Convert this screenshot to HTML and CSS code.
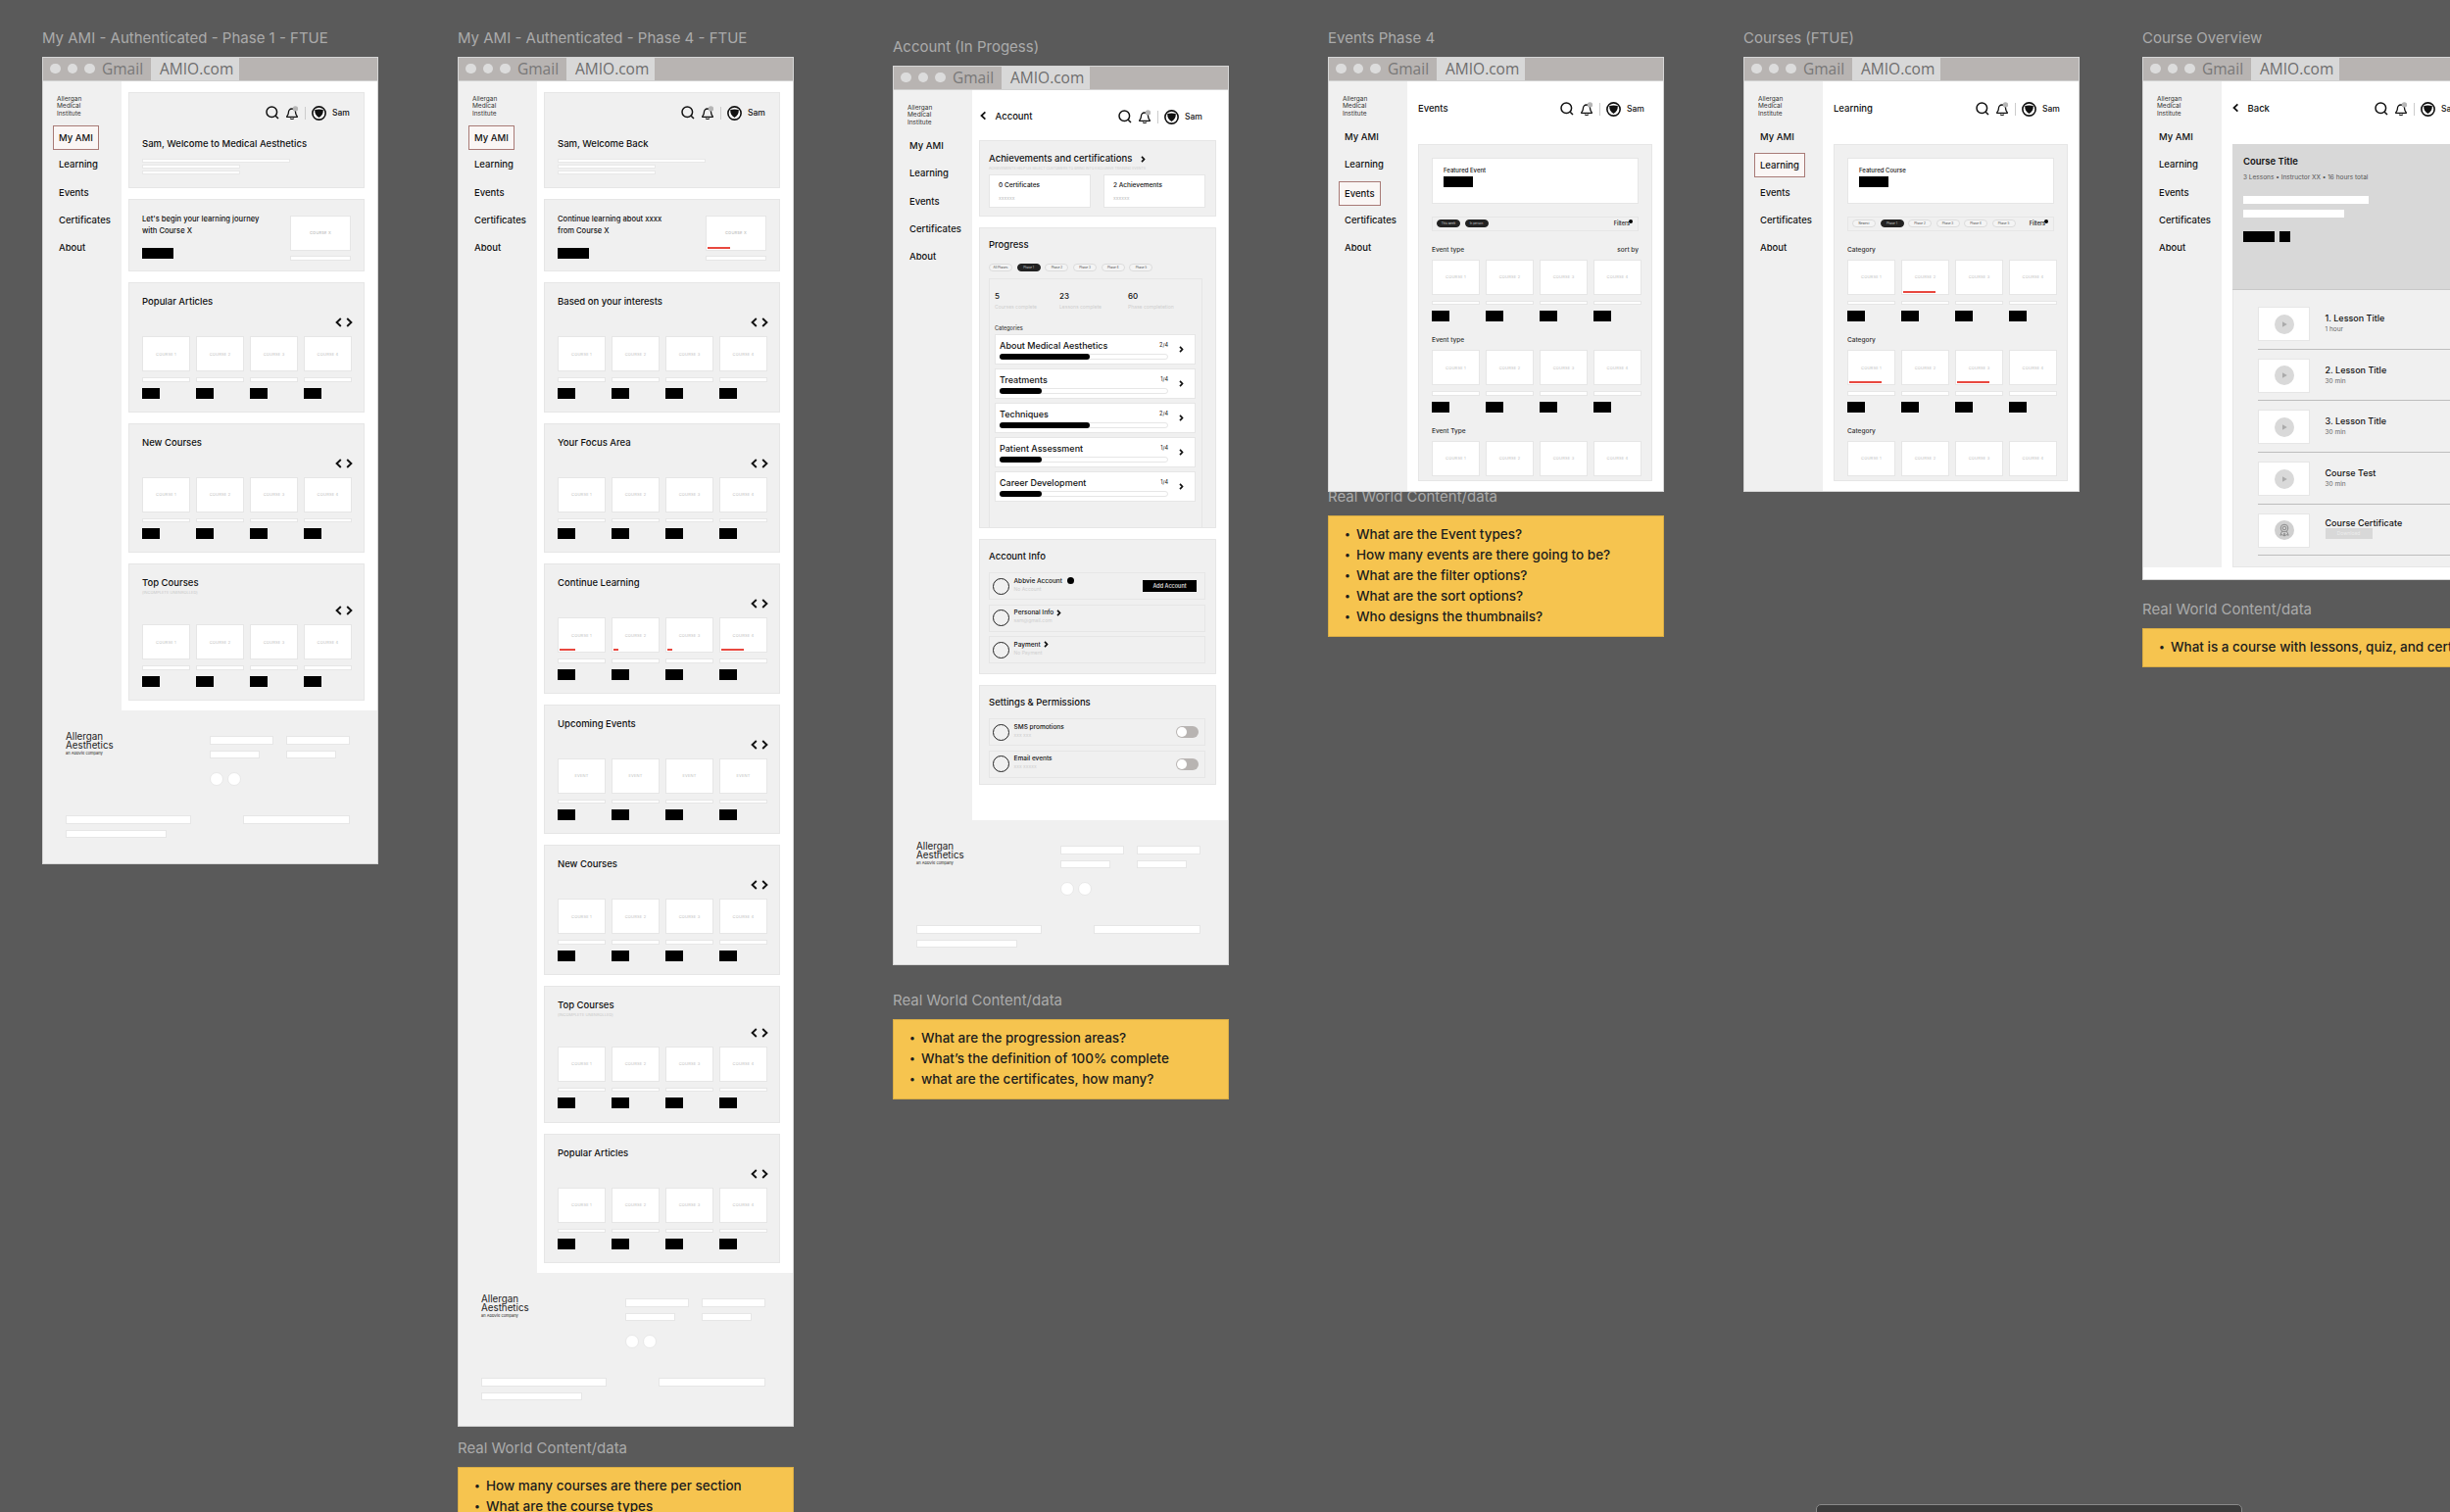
FILE: index.html
```html
<!DOCTYPE html>
<html lang="en">
<head>
    <meta charset="UTF-8">
    <title>AMI wireframes</title>
    <link rel="stylesheet" href="styles.css">
</head>
<body>
<svg class="sprite" width="0" height="0">
    <symbol id="i-search" viewBox="0 0 14 14"><circle cx="6.300" cy="6.300" r="5.300" fill="none" stroke="#111" stroke-width="1.500"/><path d="M10.200 10.200l2.800 2.800" stroke="#111" stroke-width="1.500"/></symbol>
    <symbol id="i-bell" viewBox="0 0 13 15"><path d="M6 3c-2.400 0-3.600 1.800-3.600 3.800 0 2-.8 3-1.600 3.800v.7h10.400v-.7c-.8-.8-1.600-1.800-1.600-3.800C9.600 4.800 8.400 3 6 3z" fill="none" stroke="#111" stroke-width="1.300"/><path d="M4.200 12.600c.4 1.200 3.200 1.200 3.600 0" fill="none" stroke="#111" stroke-width="1.200"/><circle cx="9.400" cy="2.900" r="2.700" fill="#b5b5b5"/></symbol>
    <symbol id="i-avatar" viewBox="0 0 14 14"><circle cx="7" cy="7" r="6.200" fill="#fff" stroke="#111" stroke-width="1.500"/><path d="M3 3.800c2.600-.7 5.400-.7 8 0 .2 3.600-1.200 6-4 7.400-2.800-1.400-4.200-3.800-4-7.400z" fill="#111"/></symbol>
    <symbol id="i-left" viewBox="0 0 7 10"><path d="M5.800 1L1.600 5l4.200 4" fill="none" stroke="#111" stroke-width="1.900"/></symbol>
    <symbol id="i-right" viewBox="0 0 7 10"><path d="M1.200 1l4.200 4-4.200 4" fill="none" stroke="#111" stroke-width="1.900"/></symbol>
    <symbol id="i-chev" viewBox="0 0 5 7"><path d="M1 .8l2.500 2.700L1 6.200" fill="none" stroke="#111" stroke-width="1.700"/></symbol>
    <symbol id="i-play" viewBox="0 0 20 20"><circle cx="10" cy="10" r="10" fill="#d9d9d9"/><path d="M8 7.300l4.800 2.700L8 12.700z" fill="#ababab"/></symbol>
    <symbol id="i-badge" viewBox="0 0 20 20"><circle cx="10" cy="10" r="10" fill="#d0d0d0"/><circle cx="10" cy="8" r="3.800" fill="none" stroke="#8c8c8c"/><circle cx="10" cy="8" r="1.800" fill="none" stroke="#8c8c8c"/><path d="M7.500 11.200l-1.700 4 2.300-.6 1.400 1.500.5-3 .5 3 1.400-1.500 2.300.6-1.700-4" fill="none" stroke="#8c8c8c"/></symbol>
</svg>

<div class="board">

    <!-- My AMI phase 1 -->
    <section class="group group-ftue">
        <div class="label">My AMI - Authenticated - Phase 1 - FTUE</div>
        <div class="frame">
            <div class="browser"><span class="dots"><i></i><i></i><i></i></span><span class="gmail">Gmail</span><span class="tab">AMIO.com</span></div>
            <div class="page">
                <aside class="side">
                    <div class="brand">Allergan<br>Medical<br>Institute</div>
                    <a class="nav active">My AMI</a><a class="nav">Learning</a><a class="nav">Events</a><a class="nav">Certificates</a><a class="nav">About</a>
                </aside>
                <main class="main main-cards">
                    <div class="card card-welcome">
                        <div class="tools"><svg class="t-search"><use href="#i-search"/></svg><svg class="t-bell"><use href="#i-bell"/></svg><i class="t-sep"></i><svg class="t-avatar"><use href="#i-avatar"/></svg><span class="t-name">Sam</span></div>
                        <h3 class="welcome-title">Sam, Welcome to Medical Aesthetics</h3>
                        <i class="line line-long"></i><i class="line"></i><i class="line"></i>
                    </div>
                    <div class="card card-promo">
                        <div class="promo-text"><p>Let's begin your learning journey<br>with Course X</p><i class="black promo-btn"></i></div>
                        <div class="promo-thumb"><div class="thumb thumb-x">COURSE X</div><i class="bar"></i></div>
                    </div>
                    <div class="card card-row">
                        <h3>Popular Articles</h3>
                        <div class="arrows"><svg><use href="#i-left"/></svg><svg><use href="#i-right"/></svg></div>
                        <div class="tiles">
                            <div class="tile"><div class="thumb">COURSE 1</div><i class="bar"></i><i class="black"></i></div>
                            <div class="tile"><div class="thumb">COURSE 2</div><i class="bar"></i><i class="black"></i></div>
                            <div class="tile"><div class="thumb">COURSE 3</div><i class="bar"></i><i class="black"></i></div>
                            <div class="tile"><div class="thumb">COURSE 4</div><i class="bar"></i><i class="black"></i></div>
                        </div>
                    </div>
                    <div class="card card-row">
                        <h3>New Courses</h3>
                        <div class="arrows"><svg><use href="#i-left"/></svg><svg><use href="#i-right"/></svg></div>
                        <div class="tiles">
                            <div class="tile"><div class="thumb">COURSE 1</div><i class="bar"></i><i class="black"></i></div>
                            <div class="tile"><div class="thumb">COURSE 2</div><i class="bar"></i><i class="black"></i></div>
                            <div class="tile"><div class="thumb">COURSE 3</div><i class="bar"></i><i class="black"></i></div>
                            <div class="tile"><div class="thumb">COURSE 4</div><i class="bar"></i><i class="black"></i></div>
                        </div>
                    </div>
                    <div class="card card-row">
                        <h3>Top Courses</h3>
                        <div class="row-note">(INCOMPLETE UNENROLLED)</div>
                        <div class="arrows"><svg><use href="#i-left"/></svg><svg><use href="#i-right"/></svg></div>
                        <div class="tiles">
                            <div class="tile"><div class="thumb">COURSE 1</div><i class="bar"></i><i class="black"></i></div>
                            <div class="tile"><div class="thumb">COURSE 2</div><i class="bar"></i><i class="black"></i></div>
                            <div class="tile"><div class="thumb">COURSE 3</div><i class="bar"></i><i class="black"></i></div>
                            <div class="tile"><div class="thumb">COURSE 4</div><i class="bar"></i><i class="black"></i></div>
                        </div>
                    </div>
                </main>
            </div>
            <footer class="foot">
                <div class="foot-top">
                    <div class="foot-logo">Allergan<br>Aesthetics<small>an AbbVie company</small></div>
                    <div class="foot-links"><i class="fl"></i><i class="fl"></i><i class="fl fl-short"></i><i class="fl fl-short"></i><span class="foot-dots"><i></i><i></i></span></div>
                </div>
                <div class="foot-bottom">
                    <div><i class="fb fb-a"></i><i class="fb fb-b"></i></div>
                    <i class="fb fb-c"></i>
                </div>
            </footer>
        </div>
    </section>

    <!-- My AMI phase 4 -->
    <section class="group group-phase4">
        <div class="label">My AMI - Authenticated - Phase 4 - FTUE</div>
        <div class="frame">
            <div class="browser"><span class="dots"><i></i><i></i><i></i></span><span class="gmail">Gmail</span><span class="tab">AMIO.com</span></div>
            <div class="page">
                <aside class="side">
                    <div class="brand">Allergan<br>Medical<br>Institute</div>
                    <a class="nav active">My AMI</a><a class="nav">Learning</a><a class="nav">Events</a><a class="nav">Certificates</a><a class="nav">About</a>
                </aside>
                <main class="main main-cards">
                    <div class="card card-welcome">
                        <div class="tools"><svg class="t-search"><use href="#i-search"/></svg><svg class="t-bell"><use href="#i-bell"/></svg><i class="t-sep"></i><svg class="t-avatar"><use href="#i-avatar"/></svg><span class="t-name">Sam</span></div>
                        <h3 class="welcome-title">Sam, Welcome Back</h3>
                        <i class="line line-long"></i><i class="line"></i><i class="line"></i>
                    </div>
                    <div class="card card-promo">
                        <div class="promo-text"><p>Continue learning about xxxx<br>from Course X</p><i class="black promo-btn"></i></div>
                        <div class="promo-thumb"><div class="thumb thumb-x">COURSE X<i class="prog" style="width:23px"></i></div><i class="bar"></i></div>
                    </div>
                    <div class="card card-row">
                        <h3>Based on your interests</h3>
                        <div class="arrows"><svg><use href="#i-left"/></svg><svg><use href="#i-right"/></svg></div>
                        <div class="tiles">
                            <div class="tile"><div class="thumb">COURSE 1</div><i class="bar"></i><i class="black"></i></div>
                            <div class="tile"><div class="thumb">COURSE 2</div><i class="bar"></i><i class="black"></i></div>
                            <div class="tile"><div class="thumb">COURSE 3</div><i class="bar"></i><i class="black"></i></div>
                            <div class="tile"><div class="thumb">COURSE 4</div><i class="bar"></i><i class="black"></i></div>
                        </div>
                    </div>
                    <div class="card card-row">
                        <h3>Your Focus Area</h3>
                        <div class="arrows"><svg><use href="#i-left"/></svg><svg><use href="#i-right"/></svg></div>
                        <div class="tiles">
                            <div class="tile"><div class="thumb">COURSE 1</div><i class="bar"></i><i class="black"></i></div>
                            <div class="tile"><div class="thumb">COURSE 2</div><i class="bar"></i><i class="black"></i></div>
                            <div class="tile"><div class="thumb">COURSE 3</div><i class="bar"></i><i class="black"></i></div>
                            <div class="tile"><div class="thumb">COURSE 4</div><i class="bar"></i><i class="black"></i></div>
                        </div>
                    </div>
                    <div class="card card-row">
                        <h3>Continue Learning</h3>
                        <div class="arrows"><svg><use href="#i-left"/></svg><svg><use href="#i-right"/></svg></div>
                        <div class="tiles">
                            <div class="tile"><div class="thumb">COURSE 1<i class="prog" style="width:16px"></i></div><i class="bar"></i><i class="black"></i></div>
                            <div class="tile"><div class="thumb">COURSE 2<i class="prog" style="width:5px"></i></div><i class="bar"></i><i class="black"></i></div>
                            <div class="tile"><div class="thumb">COURSE 3<i class="prog" style="width:5px"></i></div><i class="bar"></i><i class="black"></i></div>
                            <div class="tile"><div class="thumb">COURSE 4<i class="prog" style="width:23px"></i></div><i class="bar"></i><i class="black"></i></div>
                        </div>
                    </div>
                    <div class="card card-row">
                        <h3>Upcoming Events</h3>
                        <div class="arrows"><svg><use href="#i-left"/></svg><svg><use href="#i-right"/></svg></div>
                        <div class="tiles">
                            <div class="tile"><div class="thumb">EVENT</div><i class="bar"></i><i class="black"></i></div>
                            <div class="tile"><div class="thumb">EVENT</div><i class="bar"></i><i class="black"></i></div>
                            <div class="tile"><div class="thumb">EVENT</div><i class="bar"></i><i class="black"></i></div>
                            <div class="tile"><div class="thumb">EVENT</div><i class="bar"></i><i class="black"></i></div>
                        </div>
                    </div>
                    <div class="card card-row">
                        <h3>New Courses</h3>
                        <div class="arrows"><svg><use href="#i-left"/></svg><svg><use href="#i-right"/></svg></div>
                        <div class="tiles">
                            <div class="tile"><div class="thumb">COURSE 1</div><i class="bar"></i><i class="black"></i></div>
                            <div class="tile"><div class="thumb">COURSE 2</div><i class="bar"></i><i class="black"></i></div>
                            <div class="tile"><div class="thumb">COURSE 3</div><i class="bar"></i><i class="black"></i></div>
                            <div class="tile"><div class="thumb">COURSE 4</div><i class="bar"></i><i class="black"></i></div>
                        </div>
                    </div>
                    <div class="card card-row">
                        <h3>Top Courses</h3>
                        <div class="row-note">(INCOMPLETE UNENROLLED)</div>
                        <div class="arrows"><svg><use href="#i-left"/></svg><svg><use href="#i-right"/></svg></div>
                        <div class="tiles">
                            <div class="tile"><div class="thumb">COURSE 1</div><i class="bar"></i><i class="black"></i></div>
                            <div class="tile"><div class="thumb">COURSE 2</div><i class="bar"></i><i class="black"></i></div>
                            <div class="tile"><div class="thumb">COURSE 3</div><i class="bar"></i><i class="black"></i></div>
                            <div class="tile"><div class="thumb">COURSE 4</div><i class="bar"></i><i class="black"></i></div>
                        </div>
                    </div>
                    <div class="card card-row">
                        <h3>Popular Articles</h3>
                        <div class="arrows"><svg><use href="#i-left"/></svg><svg><use href="#i-right"/></svg></div>
                        <div class="tiles">
                            <div class="tile"><div class="thumb">COURSE 1</div><i class="bar"></i><i class="black"></i></div>
                            <div class="tile"><div class="thumb">COURSE 2</div><i class="bar"></i><i class="black"></i></div>
                            <div class="tile"><div class="thumb">COURSE 3</div><i class="bar"></i><i class="black"></i></div>
                            <div class="tile"><div class="thumb">COURSE 4</div><i class="bar"></i><i class="black"></i></div>
                        </div>
                    </div>
                </main>
            </div>
            <footer class="foot">
                <div class="foot-top">
                    <div class="foot-logo">Allergan<br>Aesthetics<small>an AbbVie company</small></div>
                    <div class="foot-links"><i class="fl"></i><i class="fl"></i><i class="fl fl-short"></i><i class="fl fl-short"></i><span class="foot-dots"><i></i><i></i></span></div>
                </div>
                <div class="foot-bottom">
                    <div><i class="fb fb-a"></i><i class="fb fb-b"></i></div>
                    <i class="fb fb-c"></i>
                </div>
            </footer>
        </div>
        <div class="label label-data">Real World Content/data</div>
        <ul class="note">
            <li>How many courses are there per section</li>
            <li>What are the course types</li>
        </ul>
    </section>

    <!-- Account -->
    <section class="group group-account">
        <div class="label">Account (In Progess)</div>
        <div class="frame">
            <div class="browser"><span class="dots"><i></i><i></i><i></i></span><span class="gmail">Gmail</span><span class="tab">AMIO.com</span></div>
            <div class="page">
                <aside class="side">
                    <div class="brand">Allergan<br>Medical<br>Institute</div>
                    <a class="nav">My AMI</a><a class="nav">Learning</a><a class="nav">Events</a><a class="nav">Certificates</a><a class="nav">About</a>
                </aside>
                <main class="main main-account">
                    <div class="head head-account">
                        <div class="head-title"><svg class="back"><use href="#i-left"/></svg>Account</div>
                        <div class="tools"><svg class="t-search"><use href="#i-search"/></svg><svg class="t-bell"><use href="#i-bell"/></svg><i class="t-sep"></i><svg class="t-avatar"><use href="#i-avatar"/></svg><span class="t-name">Sam</span></div>
                    </div>
                    <div class="card card-achieve">
                        <h3>Achievements and certifications <svg class="mini"><use href="#i-chev"/></svg></h3>
                        <div class="fine">ACHIEVEMENTS HELP US SELECT CUSTOMERS TO BRING INTO EXCLUSIVE TRAINING EVENTS</div>
                        <div class="achieve-boxes">
                            <div class="achieve"><b>0 Certificates</b><span>xxxxxx</span></div>
                            <div class="achieve"><b>2 Achievements</b><span>xxxxxx</span></div>
                        </div>
                    </div>
                    <div class="card card-progress">
                        <h3>Progress</h3>
                        <div class="chips">
                            <span class="chip">All Phases</span><span class="chip chip-on">Phase 1</span><span class="chip">Phase 2</span><span class="chip">Phase 3</span><span class="chip">Phase 4</span><span class="chip">Phase 5</span>
                        </div>
                        <div class="progress-panel">
                            <div class="stats">
                                <div class="stat"><b>5</b><span>Courses complete</span></div>
                                <div class="stat"><b>23</b><span>Lessons complete</span></div>
                                <div class="stat"><b>60</b><span>Phase completetion</span></div>
                            </div>
                            <div class="cat-label">Categories</div>
                            <div class="cat"><div class="cat-body"><div class="cat-top"><b>About Medical Aesthetics</b><span>2/4</span></div><div class="track"><i style="width:54%"></i></div></div><svg class="mini"><use href="#i-chev"/></svg></div>
                            <div class="cat"><div class="cat-body"><div class="cat-top"><b>Treatments</b><span>1/4</span></div><div class="track"><i style="width:25%"></i></div></div><svg class="mini"><use href="#i-chev"/></svg></div>
                            <div class="cat"><div class="cat-body"><div class="cat-top"><b>Techniques</b><span>2/4</span></div><div class="track"><i style="width:54%"></i></div></div><svg class="mini"><use href="#i-chev"/></svg></div>
                            <div class="cat"><div class="cat-body"><div class="cat-top"><b>Patient Assessment</b><span>1/4</span></div><div class="track"><i style="width:25%"></i></div></div><svg class="mini"><use href="#i-chev"/></svg></div>
                            <div class="cat"><div class="cat-body"><div class="cat-top"><b>Career Development</b><span>1/4</span></div><div class="track"><i style="width:25%"></i></div></div><svg class="mini"><use href="#i-chev"/></svg></div>
                        </div>
                    </div>
                    <div class="card card-info">
                        <h3>Account Info</h3>
                        <div class="info"><i class="ring"></i><div class="info-text"><b>Abbvie Account <i class="info-dot"></i></b><span>No Account</span></div><span class="add">Add Account</span></div>
                        <div class="info"><i class="ring"></i><div class="info-text"><b>Personal Info <svg class="mini"><use href="#i-chev"/></svg></b><span>sam@gmail.com</span></div></div>
                        <div class="info"><i class="ring"></i><div class="info-text"><b>Payment <svg class="mini"><use href="#i-chev"/></svg></b><span>No Payment</span></div></div>
                    </div>
                    <div class="card card-settings">
                        <h3>Settings &amp; Permissions</h3>
                        <div class="info"><i class="ring"></i><div class="info-text"><b>SMS promotions</b><span>xxx xxx</span></div><i class="toggle"></i></div>
                        <div class="info"><i class="ring"></i><div class="info-text"><b>Email events</b><span>xxx xxxxx</span></div><i class="toggle"></i></div>
                    </div>
                </main>
            </div>
            <footer class="foot foot-short">
                <div class="foot-top">
                    <div class="foot-logo">Allergan<br>Aesthetics<small>an AbbVie company</small></div>
                    <div class="foot-links"><i class="fl"></i><i class="fl"></i><i class="fl fl-short"></i><i class="fl fl-short"></i><span class="foot-dots"><i></i><i></i></span></div>
                </div>
                <div class="foot-bottom">
                    <div><i class="fb fb-a"></i><i class="fb fb-b"></i></div>
                    <i class="fb fb-c"></i>
                </div>
            </footer>
        </div>
        <div class="label label-data">Real World Content/data</div>
        <ul class="note">
            <li>What are the progression areas?</li>
            <li>What’s the definition of 100% complete</li>
            <li>what are the certificates, how many?</li>
        </ul>
    </section>

    <!-- Events -->
    <section class="group group-events">
        <div class="label">Events Phase 4</div>
        <div class="frame">
            <div class="browser"><span class="dots"><i></i><i></i><i></i></span><span class="gmail">Gmail</span><span class="tab">AMIO.com</span></div>
            <div class="page">
                <aside class="side">
                    <div class="brand">Allergan<br>Medical<br>Institute</div>
                    <a class="nav">My AMI</a><a class="nav">Learning</a><a class="nav active">Events</a><a class="nav">Certificates</a><a class="nav">About</a>
                </aside>
                <main class="main main-list">
                    <div class="head">
                        <div class="head-title">Events</div>
                        <div class="tools"><svg class="t-search"><use href="#i-search"/></svg><svg class="t-bell"><use href="#i-bell"/></svg><i class="t-sep"></i><svg class="t-avatar"><use href="#i-avatar"/></svg><span class="t-name">Sam</span></div>
                    </div>
                    <div class="panel">
                        <div class="featured"><p>Featured Event</p><i class="black featured-btn"></i></div>
                        <div class="filters">
                            <span class="chip chip-on">This week</span><span class="chip chip-on">In person</span>
                            <span class="filter-link">Filters</span>
                        </div>
                        <div class="section-label"><span>Event type</span><span class="sort">sort by</span></div>
                        <div class="tiles">
                            <div class="tile"><div class="thumb">COURSE 1</div><i class="bar"></i><i class="black"></i></div>
                            <div class="tile"><div class="thumb">COURSE 2</div><i class="bar"></i><i class="black"></i></div>
                            <div class="tile"><div class="thumb">COURSE 3</div><i class="bar"></i><i class="black"></i></div>
                            <div class="tile"><div class="thumb">COURSE 4</div><i class="bar"></i><i class="black"></i></div>
                        </div>
                        <div class="section-label"><span>Event type</span></div>
                        <div class="tiles">
                            <div class="tile"><div class="thumb">COURSE 1</div><i class="bar"></i><i class="black"></i></div>
                            <div class="tile"><div class="thumb">COURSE 2</div><i class="bar"></i><i class="black"></i></div>
                            <div class="tile"><div class="thumb">COURSE 3</div><i class="bar"></i><i class="black"></i></div>
                            <div class="tile"><div class="thumb">COURSE 4</div><i class="bar"></i><i class="black"></i></div>
                        </div>
                        <div class="section-label"><span>Event Type</span></div>
                        <div class="tiles">
                            <div class="tile"><div class="thumb">COURSE 1</div></div>
                            <div class="tile"><div class="thumb">COURSE 2</div></div>
                            <div class="tile"><div class="thumb">COURSE 3</div></div>
                            <div class="tile"><div class="thumb">COURSE 4</div></div>
                        </div>
                    </div>
                </main>
            </div>
        </div>
        <div class="label label-data">Real World Content/data</div>
        <ul class="note">
            <li>What are the Event types?</li>
            <li>How many events are there going to be?</li>
            <li>What are the filter options?</li>
            <li>What are the sort options?</li>
            <li>Who designs the thumbnails?</li>
        </ul>
    </section>

    <!-- Courses -->
    <section class="group group-courses">
        <div class="label">Courses (FTUE)</div>
        <div class="frame">
            <div class="browser"><span class="dots"><i></i><i></i><i></i></span><span class="gmail">Gmail</span><span class="tab">AMIO.com</span></div>
            <div class="page">
                <aside class="side">
                    <div class="brand">Allergan<br>Medical<br>Institute</div>
                    <a class="nav">My AMI</a><a class="nav active">Learning</a><a class="nav">Events</a><a class="nav">Certificates</a><a class="nav">About</a>
                </aside>
                <main class="main main-list">
                    <div class="head">
                        <div class="head-title">Learning</div>
                        <div class="tools"><svg class="t-search"><use href="#i-search"/></svg><svg class="t-bell"><use href="#i-bell"/></svg><i class="t-sep"></i><svg class="t-avatar"><use href="#i-avatar"/></svg><span class="t-name">Sam</span></div>
                    </div>
                    <div class="panel">
                        <div class="featured"><p>Featured Course</p><i class="black featured-btn"></i></div>
                        <div class="filters">
                            <span class="chip">Newest</span><span class="chip chip-on">Phase 1</span><span class="chip">Phase 2</span><span class="chip">Phase 3</span><span class="chip">Phase 4</span><span class="chip">Phase 5</span>
                            <span class="filter-link">Filters</span>
                        </div>
                        <div class="section-label"><span>Category</span></div>
                        <div class="tiles">
                            <div class="tile"><div class="thumb">COURSE 1</div><i class="bar"></i><i class="black"></i></div>
                            <div class="tile"><div class="thumb">COURSE 2<i class="prog" style="width:33px"></i></div><i class="bar"></i><i class="black"></i></div>
                            <div class="tile"><div class="thumb">COURSE 3</div><i class="bar"></i><i class="black"></i></div>
                            <div class="tile"><div class="thumb">COURSE 4</div><i class="bar"></i><i class="black"></i></div>
                        </div>
                        <div class="section-label"><span>Category</span></div>
                        <div class="tiles">
                            <div class="tile"><div class="thumb">COURSE 1<i class="prog" style="width:33px"></i></div><i class="bar"></i><i class="black"></i></div>
                            <div class="tile"><div class="thumb">COURSE 2</div><i class="bar"></i><i class="black"></i></div>
                            <div class="tile"><div class="thumb">COURSE 3<i class="prog" style="width:33px"></i></div><i class="bar"></i><i class="black"></i></div>
                            <div class="tile"><div class="thumb">COURSE 4</div><i class="bar"></i><i class="black"></i></div>
                        </div>
                        <div class="section-label"><span>Category</span></div>
                        <div class="tiles">
                            <div class="tile"><div class="thumb">COURSE 1</div></div>
                            <div class="tile"><div class="thumb">COURSE 2</div></div>
                            <div class="tile"><div class="thumb">COURSE 3</div></div>
                            <div class="tile"><div class="thumb">COURSE 4</div></div>
                        </div>
                    </div>
                </main>
            </div>
        </div>
    </section>

    <!-- Course overview -->
    <section class="group group-overview">
        <div class="label">Course Overview</div>
        <div class="frame">
            <div class="browser"><span class="dots"><i></i><i></i><i></i></span><span class="gmail">Gmail</span><span class="tab">AMIO.com</span></div>
            <div class="page">
                <aside class="side side-overview">
                    <div class="brand">Allergan<br>Medical<br>Institute</div>
                    <a class="nav">My AMI</a><a class="nav">Learning</a><a class="nav">Events</a><a class="nav">Certificates</a><a class="nav">About</a>
                </aside>
                <main class="main main-list main-overview">
                    <div class="head">
                        <div class="head-title head-back"><svg class="back"><use href="#i-left"/></svg>Back</div>
                        <div class="tools"><svg class="t-search"><use href="#i-search"/></svg><svg class="t-bell"><use href="#i-bell"/></svg><i class="t-sep"></i><svg class="t-avatar"><use href="#i-avatar"/></svg><span class="t-name">Sam</span></div>
                    </div>
                    <div class="hero">
                        <h3>Course Title</h3>
                        <p>3 Lessons • Instructor XX • 16 hours total</p>
                        <i class="hero-bar"></i><i class="hero-bar hero-bar-short"></i>
                        <div class="hero-btns"><i class="black hero-btn"></i><i class="black hero-btn-small"></i></div>
                    </div>
                    <div class="lessons">
                        <div class="lesson"><div class="lesson-thumb"><svg><use href="#i-play"/></svg></div><div><b>1. Lesson Title</b><span>1 hour</span></div></div>
                        <div class="lesson"><div class="lesson-thumb"><svg><use href="#i-play"/></svg></div><div><b>2. Lesson Title</b><span>30 min</span></div></div>
                        <div class="lesson"><div class="lesson-thumb"><svg><use href="#i-play"/></svg></div><div><b>3. Lesson Title</b><span>30 min</span></div></div>
                        <div class="lesson"><div class="lesson-thumb"><svg><use href="#i-play"/></svg></div><div><b>Course Test</b><span>30 min</span></div></div>
                        <div class="lesson lesson-cert"><div class="lesson-thumb"><svg><use href="#i-badge"/></svg></div><div><b>Course Certificate</b><span class="download">Download</span></div></div>
                    </div>
                </main>
            </div>
        </div>
        <div class="label label-data">Real World Content/data</div>
        <ul class="note">
            <li>What is a course with lessons, quiz, and certificate</li>
        </ul>
    </section>

    <div class="bottom-panel"></div>
</div>
</body>
</html>
```

FILE: styles.css
```css
* {
    box-sizing: border-box;
}

html,
body {
    margin: 0;
    background: #5a5a5a;
}

.sprite {
    position: absolute;
}

i {
    display: block;
    font-style: normal;
}

h3,
p {
    margin: 0;
}

.black {
    width: 18px;
    height: 11px;
    margin-top: 6px;
    background: #000;
}

.board {
    position: relative;
    width: 2500px;
    height: 1543px;
    overflow: hidden;
    font-family: Inter, "Liberation Sans", sans-serif;
    color: #111;
}

/* frames sit on a free canvas */
.group {
    position: absolute;
    width: 343px;
}
.group-ftue { left: 43px; top: 31px; }
.group-phase4 { left: 467px; top: 31px; }
.group-account { left: 911px; top: 40px; }
.group-events { left: 1355px; top: 31px; }
.group-courses { left: 1779px; top: 31px; }
.group-overview { left: 2186px; top: 31px; }

.bottom-panel {
    position: absolute;
    left: 1853px;
    top: 1535px;
    width: 435px;
    height: 20px;
    background: #3c3c3c;
    border: 1px solid #8a8a8a;
    border-radius: 5px;
}

.label {
    height: 16px;
    margin-bottom: 11px;
    font-size: 15px;
    line-height: 16px;
    color: #ababab;
    white-space: nowrap;
}

.group-phase4 .label-data { margin-top: 14px; }
.group-account .label-data { margin-top: 28px; }
.group-events .label-data { margin-top: -3px; }
.group-overview .label-data { margin-top: 22px; }

.note {
    margin: 0;
    padding: 8px 8px 9px 28px;
    list-style: none;
    background: #f6c44f;
    border: 1px solid #d9ad45;
    font-size: 13.500px;
    font-weight: 500;
    line-height: 21px;
    color: #1c1c1c;
    white-space: nowrap;
}
.note li {
    position: relative;
}
.note li::before {
    content: "•";
    position: absolute;
    left: -12px;
    font-size: 11px;
}

.frame {
    width: 343px;
    background: #fff;
    outline: 1px solid #d6d6d6;
    outline-offset: -1px;
}

/* fake browser bar */
.browser {
    display: flex;
    align-items: stretch;
    height: 25px;
    padding-left: 8px;
    background: #b8b4b2;
    border-bottom: 1px solid #d0d0d0;
    font-family: "Open Sans", sans-serif;
    font-size: 15.500px;
    line-height: 24px;
}
.dots {
    display: flex;
    align-items: center;
    gap: 7px;
    width: 53px;
}
.dots i {
    width: 10.500px;
    height: 10.500px;
    border-radius: 50%;
    background: #dcdcdc;
}
.gmail {
    width: 50px;
    color: #787878;
}
.tab {
    width: 90px;
    padding-left: 9px;
    background: #d8d8d8;
    color: #6e6e6e;
}

.page {
    display: flex;
    align-items: stretch;
}

.side {
    display: flex;
    flex-direction: column;
    align-items: flex-start;
    flex: 0 0 81px;
    padding-top: 15px;
    background: #f0f0f0;
}
.side-overview {
    margin-bottom: 13px;
}
.brand {
    margin: 0 0 5px 15px;
    font-size: 6.500px;
    line-height: 7.400px;
    color: #333;
}
.nav {
    display: flex;
    align-items: center;
    height: 28.400px;
    margin-left: 11px;
    padding: 0 5px;
    border: 1px solid transparent;
    font-size: 9.500px;
    font-weight: 500;
    white-space: nowrap;
}
.nav.active {
    background: #faf6f5;
    border-color: #a87a76;
    height: 25px;
    margin-top: 2.500px;
    margin-bottom: .900px;
}

.main {
    flex: 1;
    min-width: 0;
}
.main-cards {
    display: flex;
    flex-direction: column;
    gap: 11px;
    padding: 10.500px 14px 10px 7px;
}
.main-account {
    padding: 19px 13px 36px 7px;
}
.main-list {
    padding: 20px 12px 11px 11px;
}
.main-overview {
    padding: 20px 0 13px 11px;
}

.head {
    display: flex;
    justify-content: space-between;
    align-items: center;
    height: 16px;
    margin-bottom: 28px;
    padding-right: 8px;
    font-size: 9.500px;
    font-weight: 500;
}
.head-account {
    margin-bottom: 16px;
    padding-right: 14px;
}
.head-title {
    display: flex;
    align-items: center;
    margin-bottom: 2px;
}
.back {
    width: 6.500px;
    height: 10px;
    margin-right: 9px;
}
.head-account .head-title {
    padding-left: 1px;
}
.main-overview .tools {
    padding-right: 12px;
}

.tools {
    display: flex;
    align-items: center;
    height: 15px;
    font-size: 8.500px;
    font-weight: 500;
}
.t-search { width: 14px; height: 14px; margin-right: 7px; }
.t-bell { width: 13px; height: 15px; margin-right: 6px; }
.t-sep { width: 1px; height: 13px; margin-right: 6px; background: #ccc; }
.t-avatar { width: 15px; height: 15px; margin-right: 6px; }
.t-name { width: 18px; }
.mini { width: 5px; height: 7px; flex: none; }

.card {
    background: #f0f0f0;
    border: 1px solid #e6e6e6;
}
.card h3 {
    font-size: 9.500px;
    font-weight: 500;
    line-height: 12px;
}

.card-welcome {
    height: 98.500px;
    padding: 13px 14px 0 13px;
}
.card-welcome .tools {
    justify-content: flex-end;
}
.card h3.welcome-title {
    margin: 18px 0 9px;
    font-weight: 500;
}
.line {
    width: 100px;
    height: 4px;
    margin-bottom: 2px;
    background: #fff;
    border: 1px solid #e8e8e8;
}
.line-long { width: 151px; }

.card-promo {
    display: flex;
    justify-content: space-between;
    height: 74px;
    padding: 14px 13px 0 13px;
    font-size: 7.600px;
    font-weight: 500;
    line-height: 12px;
}
.promo-btn {
    width: 32px;
    margin-top: 11px;
}
.promo-thumb {
    width: 62px;
    padding-top: 2px;
}
.thumb-x {
    height: 32px;
}
.promo-thumb .bar {
    margin-top: 5px;
}

.card-row {
    padding: 13px 13px 0 13px;
    height: 132.500px;
}
.card-row:has(.row-note) {
    height: 140px;
}
.row-note {
    height: 7px;
    font-size: 4px;
    line-height: 7px;
    color: #c8c8c8;
}
.arrows {
    display: flex;
    justify-content: flex-end;
    gap: 4px;
    height: 12px;
    margin: 9px -1.500px 8px 0;
    align-items: center;
}
.arrows svg {
    width: 7px;
    height: 10px;
}

.tiles {
    display: grid;
    grid-template-columns: repeat(4, 49px);
    gap: 6px;
}
.thumb {
    position: relative;
    display: flex;
    justify-content: center;
    align-items: center;
    height: 36px;
    background: #fff;
    border: 1px solid #e6e6e6;
    font-size: 4px;
    letter-spacing: .2px;
    color: #bdbdbd;
    white-space: nowrap;
}
.prog {
    position: absolute;
    left: 1px;
    bottom: 1px;
    height: 2px;
    background: #e8483f;
}
.bar {
    height: 4.500px;
    margin-top: 6px;
    background: #fff;
    border: 1px solid #e6e6e6;
}

/* footer */
.foot {
    height: 157px;
    padding: 22px 29px 0 24px;
    background: #f0f0f0;
}
.foot-short {
    height: 148px;
}
.foot-top {
    display: flex;
    justify-content: space-between;
}
.foot-logo {
    font-size: 9.800px;
    line-height: 9px;
    color: #222;
}
.foot-logo small {
    display: block;
    font-size: 4px;
    line-height: 7px;
}
.foot-links {
    display: grid;
    grid-template-columns: 65px 65px;
    column-gap: 13px;
    row-gap: 6px;
    padding-top: 4px;
}
.fl {
    height: 8.500px;
    background: #fff;
    border: 1px solid #e6e6e6;
}
.fl-short { width: 51px; }
.foot-dots {
    display: flex;
    gap: 4px;
    grid-column: 1 / 3;
    margin-top: 8px;
}
.foot-dots i {
    width: 14px;
    height: 14px;
    border-radius: 50%;
    background: #fff;
    border: 1px solid #e8e8e8;
}
.foot-bottom {
    display: flex;
    justify-content: space-between;
    margin-top: 30px;
}
.fb {
    height: 8.500px;
    background: #fff;
    border: 1px solid #e6e6e6;
}
.fb-a { width: 128px; margin-bottom: 6px; }
.fb-b { width: 103px; }
.fb-c { width: 109px; }

/* account */
.main-account .card {
    margin-bottom: 11px;
}
.main-account .card:last-child {
    margin-bottom: 0;
}
.card-achieve {
    height: 78px;
    padding: 12px 10px 0 9px;
}
.card-achieve h3 .mini {
    margin-left: 6px;
    vertical-align: -.5px;
}
.fine {
    height: 7px;
    margin-top: 1px;
    font-size: 3.500px;
    line-height: 7px;
    color: #cfcfcf;
    white-space: nowrap;
}
.achieve-boxes {
    display: flex;
    justify-content: space-between;
    margin-top: 2px;
}
.achieve {
    display: flex;
    flex-direction: column;
    width: 104px;
    height: 34px;
    padding: 6px 9px 0;
    background: #fff;
    border: 1px solid #e6e6e6;
}
.achieve b {
    font-size: 6.500px;
    font-weight: 500;
    line-height: 9px;
}
.achieve span {
    margin-top: 5px;
    font-size: 5px;
    color: #bdbdbd;
}

.card-progress {
    height: 307px;
    padding: 11px 13px 0 9px;
    overflow: hidden;
}
.chips {
    display: flex;
    gap: 4.700px;
    margin: 13px 0 7px;
}
.chip {
    flex: 0 0 24px;
    height: 8px;
    border: 1px solid #dcdcdc;
    border-radius: 4px;
    background: #f4f4f4;
    font-size: 3px;
    line-height: 6px;
    font-weight: 500;
    color: #666;
    text-align: center;
    white-space: nowrap;
}
.chip-on {
    background: #222;
    border-color: #222;
    color: #bbb;
}
.progress-panel {
    height: 260px;
    padding: 12px 7px 0 5px;
    border: 1px solid #e6e6e6;
}
.stats {
    display: grid;
    grid-template-columns: 66px 70px 1fr;
}
.stat b {
    display: block;
    font-size: 8px;
    font-weight: 500;
    line-height: 10px;
}
.stat span {
    display: block;
    margin-top: 3px;
    font-size: 5px;
    line-height: 7px;
    color: #cfcfcf;
    white-space: nowrap;
}
.cat-label {
    margin: 14px 0 2px;
    font-size: 5.500px;
    font-weight: 500;
    line-height: 8px;
    color: #444;
}
.cat {
    display: flex;
    align-items: center;
    width: 205px;
    height: 31px;
    margin-bottom: 4px;
    padding: 0 0 0 4px;
    background: #fff;
    border: 1px solid #e6e6e6;
}
.cat-body {
    width: 172px;
    margin-right: 11px;
}
.cat-top {
    display: flex;
    justify-content: space-between;
    align-items: center;
    height: 12px;
}
.cat-top b {
    font-size: 9px;
    font-weight: 500;
}
.cat-top span {
    font-size: 5.500px;
}
.track {
    height: 6px;
    margin-top: 3px;
    background: #fff;
    border: 1px solid #e6e6e6;
    border-radius: 3px;
}
.track i {
    height: 6px;
    margin: -1px 0 0 -1px;
    background: #000;
    border-radius: 3px;
}

.card-info {
    height: 138px;
    padding: 11px 10px 0 9px;
}
.card-settings {
    height: 102px;
    padding: 11px 10px 0 9px;
}
.card-info h3,
.card-settings h3 {
    margin-bottom: 10px;
}
.info {
    display: flex;
    align-items: center;
    height: 28px;
    margin-bottom: 4.500px;
    padding: 0 4px 0 3px;
    border: 1px solid #e6e6e6;
}
.ring {
    flex: 0 0 17px;
    height: 17px;
    margin-right: 4.500px;
    border: 1.400px solid #222;
    border-radius: 50%;
}
.info-text {
    flex: 1;
    padding-bottom: 3px;
}
.info-text b {
    display: flex;
    align-items: center;
    gap: 3px;
    font-size: 6.500px;
    font-weight: 500;
    line-height: 8px;
}
.info-text span {
    display: block;
    font-size: 5px;
    line-height: 8px;
    color: #cfcfcf;
}
.info-dot {
    width: 7px;
    height: 7px;
    margin-left: 2px;
    background: #000;
    border-radius: 50%;
}
.add {
    width: 55px;
    height: 12px;
    margin-right: 4px;
    background: #000;
    color: #e8e8e8;
    font-size: 5.500px;
    font-weight: 500;
    line-height: 12px;
    text-align: center;
}
.toggle {
    position: relative;
    flex: 0 0 23px;
    height: 12px;
    margin-right: 2px;
    background: #b8b4b2;
    border-radius: 6px;
}
.toggle::before {
    content: "";
    position: absolute;
    left: 1px;
    top: 1px;
    width: 10px;
    height: 10px;
    background: #fff;
    border-radius: 50%;
}

/* events + courses */
.panel {
    height: 344px;
    padding: 13px;
    background: #f0f0f0;
    border: 1px solid #e6e6e6;
}
.featured {
    height: 47px;
    padding: 7px 11px 0;
    background: #fff;
    border: 1px solid #e6e6e6;
    font-size: 6px;
    font-weight: 500;
    line-height: 10px;
}
.featured-btn {
    width: 30px;
    margin-top: 1px;
}
.filters {
    position: relative;
    display: flex;
    align-items: center;
    gap: 4.500px;
    height: 14.500px;
    margin-top: 13px;
    padding-left: 4px;
    border: 1px solid #e6e6e6;
}
.filter-link {
    margin-left: auto;
    margin-right: 8px;
    font-size: 5.500px;
    font-weight: 500;
}
.filter-link::after {
    content: "";
    position: absolute;
    right: 5px;
    top: 1.500px;
    width: 4px;
    height: 4px;
    background: #000;
    border-radius: 50%;
}
.section-label {
    display: flex;
    justify-content: space-between;
    height: 8px;
    margin: 15px 0 6px;
    font-size: 6.500px;
    font-weight: 500;
    line-height: 8px;
    color: #333;
}

/* course overview */
.hero {
    height: 149px;
    padding: 12px 0 0 11px;
    background: #d8d8d8;
    border-bottom: 1px solid #c8c8c8;
}
.hero h3 {
    font-size: 9.500px;
    font-weight: 600;
    line-height: 12px;
}
.hero p {
    margin-top: 6px;
    font-size: 6.500px;
    line-height: 8px;
    color: #555;
}
.hero-bar {
    width: 128px;
    height: 8px;
    margin-top: 15px;
    background: #fff;
}
.hero-bar-short {
    width: 103px;
    margin-top: 6px;
}
.hero-btns {
    display: flex;
    gap: 5px;
    margin-top: 14px;
}
.hero-btn { width: 32px; margin: 0; }
.hero-btn-small { width: 11px; margin: 0; }

.lessons {
    padding: 17px 24px 0 25px;
    height: 283px;
    background: #f0f0f0;
    border: 1px solid #e6e6e6;
    border-top: 0;
}
.lesson {
    display: flex;
    align-items: flex-start;
    gap: 15.500px;
    height: 43.700px;
    margin-bottom: 9px;
    border-bottom: 1px solid #bdbdbd;
}
.lesson-thumb {
    display: flex;
    justify-content: center;
    align-items: center;
    flex: 0 0 53px;
    height: 35px;
    background: #fff;
    border: 1px solid #e6e6e6;
}
.lesson-thumb svg {
    width: 20px;
    height: 20px;
}
.lesson b {
    display: block;
    margin-top: 6px;
    font-size: 9px;
    font-weight: 500;
    line-height: 11px;
}
.lesson span {
    display: block;
    margin-top: 2px;
    font-size: 6.500px;
    line-height: 8px;
    color: #666;
}
.lesson-cert b {
    margin-top: 4px;
}
.lesson .download {
    width: 48px;
    height: 11px;
    margin-top: 0;
    background: #d8d8d8;
    color: #eee;
    font-size: 5px;
    line-height: 11px;
    text-align: center;
}
```
